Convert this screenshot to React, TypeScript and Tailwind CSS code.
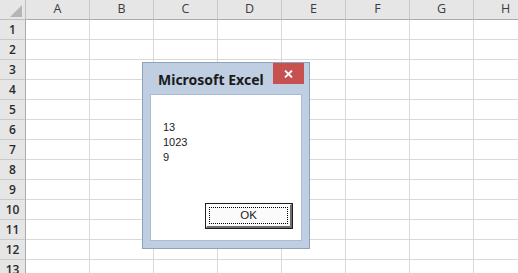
import React from "react";

const cols = ["A", "B", "C", "D", "E", "F", "G", "H"];
const rows = Array.from({ length: 13 }, (_, i) => i + 1);

function Corner() {
  return (
    <div className="w-[26px] h-[20px] shrink-0 bg-[#e6e6e6] border-r border-b border-[#bdbdbd] relative">
      <svg className="absolute left-[10px] top-[5px]" width="12" height="12" viewBox="0 0 12 12">
        <polygon points="12,0 12,12 0,12" fill="#b5b5b5" />
      </svg>
    </div>
  );
}

export default function App() {
  return (
    <div className="relative w-[518px] h-[273px] overflow-hidden bg-white" style={{ fontFamily: '"Open Sans", "Liberation Sans", sans-serif' }}>
      <div className="flex flex-col">
        <div className="flex">
          <Corner />
          {cols.map((c) => (
            <div
              key={c}
              className="w-[64px] h-[20px] shrink-0 bg-[#e6e6e6] border-r border-b border-r-[#c9c9c9] border-b-[#ababab] flex items-center justify-center text-[12.5px] text-[#3c3c3c]"
            >
              {c}
            </div>
          ))}
        </div>
        {rows.map((r) => (
          <div key={r} className="flex">
            <div className="w-[26px] h-[20px] shrink-0 bg-[#e6e6e6] border-r border-b border-r-[#ababab] border-b-[#c9c9c9] flex items-center justify-center text-[12px] font-semibold text-[#2a2a2a]">
              {r}
            </div>
            {cols.map((c) => (
              <div key={c} className="w-[64px] h-[20px] shrink-0 border-r border-b border-[#d9d9d9]" />
            ))}
          </div>
        ))}
      </div>

      <div className="absolute left-[142px] top-[62px] w-[168px] h-[187px] bg-[#bfcfe1] border border-[#8da2bb] flex flex-col">
        <div className="h-[31px] shrink-0 relative flex items-center">
          <span className="ml-[15px] mt-[1px] text-[14px] font-bold text-[#1b1b1b]" style={{ fontFamily: '"Noto Sans", "Open Sans", sans-serif' }}>
            Microsoft Excel
          </span>
          <div className="absolute right-[5px] top-0 w-[31px] h-[21px] bg-[#c75050] flex items-center justify-center">
            <svg width="9" height="8" viewBox="0 0 9 8">
              <path d="M1 0.5 L8 7.5 M8 0.5 L1 7.5" stroke="#ffffff" strokeWidth="1.8" />
            </svg>
          </div>
        </div>
        <div className="mx-[7px] mb-[7px] flex-1 bg-white border border-[#a9bcd2] flex flex-col">
          <div className="pl-[12px] pt-[25px] text-[11px] leading-[15px] text-[#222]" style={{ fontFamily: '"Liberation Sans", Arial, sans-serif' }}>
            <div>13</div>
            <div>1023</div>
            <div>9</div>
          </div>
          <div className="mt-auto mb-[11px] mr-[8px] self-end w-[88px] h-[26px] border border-[#1e1e1e] bg-[#fbfbfb]">
            <div className="w-full h-full border-t border-l border-t-white border-l-white border-b-2 border-r-2 border-b-[#6d6d6d] border-r-[#6d6d6d] p-[2px]">
              <div
                className="w-full h-full border border-dotted border-black flex items-center justify-center text-[11.5px] text-[#222]"
                style={{ fontFamily: '"Liberation Sans", Arial, sans-serif' }}
              >
                OK
              </div>
            </div>
          </div>
        </div>
      </div>
    </div>
  );
}
